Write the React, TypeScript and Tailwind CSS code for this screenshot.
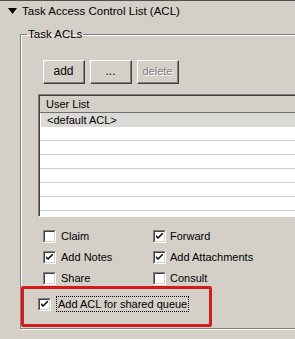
import React from 'react';

interface Perm {
  label: string;
  checked: boolean;
}

const leftPerms: Perm[] = [
  { label: 'Claim', checked: false },
  { label: 'Add Notes', checked: true },
  { label: 'Share', checked: false },
];

const rightPerms: Perm[] = [
  { label: 'Forward', checked: true },
  { label: 'Add Attachments', checked: true },
  { label: 'Consult', checked: false },
];

function CheckBox({ checked }: { checked: boolean }) {
  return (
    <div className="w-[13px] h-[13px] flex-shrink-0 border-t border-l border-[#808080] border-r border-b border-r-white border-b-white">
      <div className="w-full h-full bg-white border-t border-l border-[#404040] border-r border-b border-r-[#d4d0c8] border-b-[#d4d0c8] flex items-center justify-center">
        {checked && (
          <svg width="7" height="7" viewBox="0 0 7 7">
            <path d="M0 2 L0 4 L2 6 L7 1 L7 -1 L2 4 Z" fill="#000" />
          </svg>
        )}
      </div>
    </div>
  );
}

function Button({ label, disabled = false }: { label: string; disabled?: boolean }) {
  return (
    <div className="w-[42px] h-[24px] border-t border-l border-white border-r border-b border-r-[#404040] border-b-[#404040]">
      <div
        className={
          'w-full h-full flex items-center justify-center border-r border-b border-[#808080] pb-[1px] ' +
          (disabled ? 'text-[#808080] [text-shadow:1px_1px_0_#fff]' : 'text-black text-[12px]')
        }
      >
        {label}
      </div>
    </div>
  );
}

export default function App() {
  const blankRows = [0, 1, 2, 3, 4, 5];

  return (
    <div
      className="w-[295px] h-[339px] overflow-hidden bg-[#d4d0c8] border-t border-[#505050] text-[11px] leading-[13px] text-black"
      style={{ fontFamily: '"Liberation Sans", Arial, sans-serif' }}
    >
      {/* section header */}
      <div className="h-[20px] flex items-center pl-[8px] gap-[5px]">
        <svg width="9" height="6" viewBox="0 0 9 6">
          <polygon points="0,0 9,0 4.5,6" fill="#000" />
        </svg>
        <span className="text-[11.5px]">Task Access Control List (ACL)</span>
      </div>

      <fieldset className="mt-[7px] ml-[20px] w-[300px] p-0 border border-[#808080] shadow-[inset_1px_1px_0_#fff,1px_1px_0_#fff]">
        <legend className="ml-[6px] px-[1px] leading-[13px] text-[11.5px]">Task ACLs</legend>

        <div className="flex gap-[5px] pl-[22px] mt-[19px]">
          <Button label="add" />
          <Button label="..." />
          <Button label="delete" disabled />
        </div>

        {/* user list */}
        <div className="ml-[17px] mt-[10px] h-[123px] border-t border-l border-[#808080] border-b border-b-white">
          <div className="h-full border-t border-l border-[#404040] bg-white flex flex-col overflow-hidden">
            <div className="h-[17px] flex-shrink-0 bg-[#d4d0c8] border-b border-[#707070] flex items-center pl-[6px]">
              User List
            </div>
            <div className="h-[14px] flex-shrink-0 bg-[#dcdad6] ml-[1px] flex items-center pl-[6px]">
              &lt;default ACL&gt;
            </div>
            {blankRows.map((r) => (
              <div key={r} className="h-[14px] flex-shrink-0 border-b border-[#cfcfcf]" />
            ))}
          </div>
        </div>

        {/* permissions */}
        <div className="mt-[13px] pl-[22px] grid grid-cols-[110px_1fr] gap-y-[8px]">
          {leftPerms.map((p, i) => (
            <React.Fragment key={p.label}>
              <div className="h-[13px] flex items-center gap-[5px]">
                <CheckBox checked={p.checked} />
                <span>{p.label}</span>
              </div>
              <div className="h-[13px] flex items-center gap-[4px]">
                <CheckBox checked={rightPerms[i].checked} />
                <span>{rightPerms[i].label}</span>
              </div>
            </React.Fragment>
          ))}
        </div>

        {/* highlighted option */}
        <div className="mt-[1px] mb-[1px] w-[191px] h-[41px] border-[3px] border-[#d41c1c] rounded-[2px] pl-[14px] pt-[7px]">
          <div className="flex items-center gap-[5px]">
            <CheckBox checked />
            <span className="h-[16px] px-[1px] flex items-center border border-dotted border-black">
              Add ACL for shared queue
            </span>
          </div>
        </div>
      </fieldset>
    </div>
  );
}
